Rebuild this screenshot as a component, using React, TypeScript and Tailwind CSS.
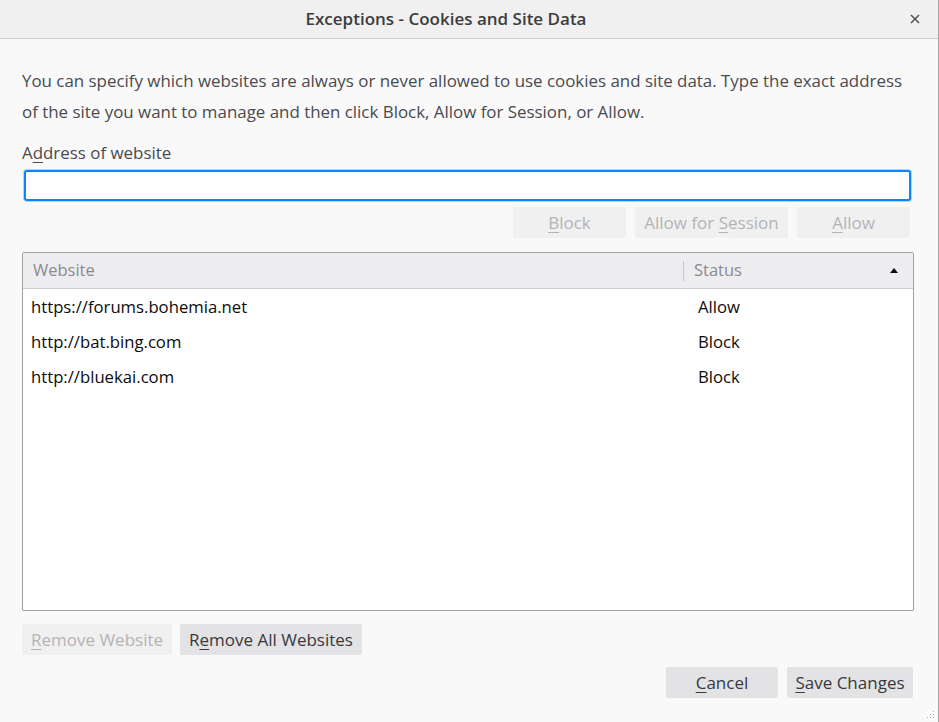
import { useState } from 'react'

const rows = [
  { site: 'https://forums.bohemia.net', status: 'Allow' },
  { site: 'http://bat.bing.com', status: 'Block' },
  { site: 'http://bluekai.com', status: 'Block' },
]

function Key({ children }: { children: string }) {
  return <span className="underline underline-offset-[3px] decoration-1">{children}</span>
}

function Btn({
  children,
  disabled,
  className = '',
}: {
  children: React.ReactNode
  disabled?: boolean
  className?: string
}) {
  return (
    <button
      disabled={disabled}
      className={`h-[31px] rounded-[2px] px-2 text-[17px] leading-none ${
        disabled ? 'bg-[#f0f0f1] text-[#b4b4b6]' : 'bg-[#e3e3e5] text-[#38383d]'
      } ${className}`}
    >
      {children}
    </button>
  )
}

export default function App() {
  const [address, setAddress] = useState('')

  return (
    <div
      className="relative flex h-[722px] w-[939px] flex-col overflow-hidden border-r border-[#a8a8a8] bg-[#f9f9fa] text-[#4a4a4f]"
      style={{ fontFamily: '"Open Sans", "Noto Sans", sans-serif' }}
    >
      {/* Title bar */}
      <div className="relative flex h-[39px] shrink-0 items-center justify-center border-b border-[#c9c9c9] bg-[#f0f0f0] pr-[46px]">
        <span className="text-[17px] font-semibold text-[#3c3c3c]">Exceptions - Cookies and Site Data</span>
        <svg className="absolute right-[18px] top-[14px]" width="10" height="10" viewBox="0 0 10 10">
          <path d="M1 1 L9 9 M9 1 L1 9" stroke="#4a4a4f" strokeWidth="1.4" />
        </svg>
      </div>

      <div className="flex flex-1 flex-col pl-[22px] pr-[25px]">
        <p className="mt-[26px] whitespace-nowrap text-[16.9px] leading-[31px]">
          You can specify which websites are always or never allowed to use cookies and site data. Type the exact address
          <br />
          of the site you want to manage and then click Block, Allow for Session, or Allow.
        </p>

        <label className="mt-[13px] text-[16.9px] leading-[26px]">
          A<Key>d</Key>dress of website
        </label>
        <input
          autoFocus
          value={address}
          onChange={(e) => setAddress(e.target.value)}
          className="ml-[2px] mt-[4px] h-[31px] w-[887px] rounded-[3px] border-2 border-[#0a84ff] bg-white px-2 text-[16px] caret-[#0c0c0d] outline-none shadow-[0_0_0_1px_rgba(10,132,255,0.3)]"
        />

        <div className="mt-[6px] flex justify-end gap-[9px] pr-[3px]">
          <Btn disabled className="w-[113px]">
            <Key>B</Key>lock
          </Btn>
          <Btn disabled className="w-[153px]">
            Allow for <Key>S</Key>ession
          </Btn>
          <Btn disabled className="w-[113px]">
            <Key>A</Key>llow
          </Btn>
        </div>

        {/* Table */}
        <div className="mt-[14px] flex h-[359px] w-[892px] flex-col overflow-hidden rounded-[2px] border border-[#a0a0a3] bg-white">
          <div className="flex h-[36px] shrink-0 items-center border-b border-[#cfcfd2] bg-[#ededf0] text-[16.5px] text-[#8a8a8f]">
            <div className="flex h-full w-[660px] items-center pl-[10px]">Website</div>
            <div className="h-[20px] w-px bg-[#c6c6c8]" />
            <div className="flex flex-1 items-center justify-between pl-[10px] pr-[15px]">
              <span>Status</span>
              <svg width="8" height="5" viewBox="0 0 8 5">
                <path d="M0 5 L4 0 L8 5 Z" fill="#0c0c0d" />
              </svg>
            </div>
          </div>
          {rows.map((r) => (
            <div key={r.site} className="flex h-[35px] items-center text-[16.7px] text-[#0c0c0d]">
              <div className="w-[667px] pl-[8px]">{r.site}</div>
              <div className="pl-[8px]">{r.status}</div>
            </div>
          ))}
        </div>

        <div className="mt-[13px] flex gap-[8px]">
          <Btn disabled className="w-[150px]">
            <Key>R</Key>emove Website
          </Btn>
          <Btn className="w-[182px]">
            R<Key>e</Key>move All Websites
          </Btn>
        </div>

        <div className="mt-[12px] flex justify-end gap-[9px]">
          <Btn className="w-[112px]">
            <Key>C</Key>ancel
          </Btn>
          <Btn className="w-[126px]">
            <Key>S</Key>ave Changes
          </Btn>
        </div>
      </div>

      {/* resize grip */}
      <svg className="absolute bottom-[3px] right-[3px]" width="8" height="8" viewBox="0 0 8 8">
        <rect x="6" y="0" width="1" height="1" fill="#b0b0b0" />
        <rect x="3" y="3" width="1" height="1" fill="#b0b0b0" />
        <rect x="6" y="3" width="1" height="1" fill="#b0b0b0" />
        <rect x="0" y="6" width="1" height="1" fill="#b0b0b0" />
        <rect x="3" y="6" width="1" height="1" fill="#b0b0b0" />
        <rect x="6" y="6" width="1" height="1" fill="#b0b0b0" />
      </svg>
    </div>
  )
}
